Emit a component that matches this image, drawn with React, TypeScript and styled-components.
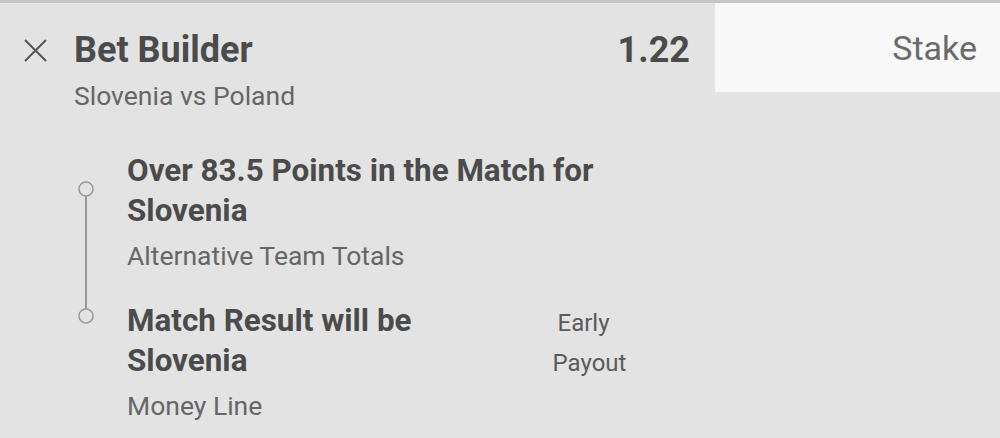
import React, { FC } from 'react';
import styled, { createGlobalStyle } from 'styled-components';

const GlobalStyle = createGlobalStyle`
  html, body {
    margin: 0;
    padding: 0;
    background: #e3e3e3;
  }
  body {
    font-family: Roboto, 'Liberation Sans', sans-serif;
  }
`;

const Slip = styled.div`
  width: 1000px;
  height: 438px;
  box-sizing: border-box;
  border-top: 3px solid #c5c5c5;
  background: #e3e3e3;
  overflow: hidden;
`;

const Header = styled.div`
  display: flex;
  align-items: flex-start;
`;

const HeaderMain = styled.div`
  flex: 1;
  display: flex;
  align-items: flex-start;
  padding: 23px 25px 0 24px;
`;

const CloseButton = styled.button`
  border: 0;
  background: none;
  padding: 0;
  margin: 13px 27px 0 0;
  width: 23px;
  height: 23px;
  display: flex;
  color: #555;
`;

const TitleBlock = styled.div`
  flex: 1;
  display: flex;
  flex-direction: column;
`;

const Title = styled.h1`
  margin: 0;
  font-size: 36px;
  line-height: 48px;
  font-weight: 700;
  color: #4b4b4b;
`;

const Subtitle = styled.div`
  margin-top: 5px;
  font-size: 26.5px;
  line-height: 34px;
  color: #666;
`;

const Odds = styled.div`
  font-size: 36px;
  line-height: 48px;
  font-weight: 700;
  color: #4b4b4b;
`;

const StakeBox = styled.div`
  width: 285px;
  height: 89px;
  box-sizing: border-box;
  background: #f8f8f8;
  display: flex;
  justify-content: flex-end;
  padding: 21px 23px 0 0;
  font-size: 34px;
  line-height: 48px;
  color: #6a6a6a;
`;

const Legs = styled.div`
  display: flex;
  padding: 38px 0 0 74px;
`;

const Rail = styled.svg`
  width: 53px;
  flex: none;
`;

const LegList = styled.div`
  display: flex;
  flex-direction: column;
  gap: 25px;
`;

const Leg = styled.div`
  display: flex;
  align-items: flex-start;
`;

const LegText = styled.div`
  width: max-content;
  max-width: 490px;
  display: flex;
  flex-direction: column;
`;

const LegTitle = styled.div`
  font-size: 31.4px;
  line-height: 40px;
  font-weight: 700;
  color: #4b4b4b;
`;

const LegMarket = styled.div`
  margin-top: 5px;
  font-size: 26.5px;
  line-height: 40px;
  color: #666;
`;

const Payout = styled.div`
  width: 100px;
  margin: 2px 0 0 122px;
  display: flex;
  flex-direction: column;
  font-size: 24px;
  line-height: 40px;
  color: #5a5a5a;
`;

const PayoutLine = styled.span<{ $indent?: number }>`
  text-align: center;
  padding-left: ${({ $indent = 0 }) => $indent}px;
`;

type LegData = { title: string[]; market: string; earlyPayout?: boolean };

const legs: LegData[] = [
  { title: ['Over 83.5 Points in the Match for', 'Slovenia'], market: 'Alternative Team Totals' },
  { title: ['Match Result will be', 'Slovenia'], market: 'Money Line', earlyPayout: true },
];

const BetLeg: FC<LegData> = ({ title, market, earlyPayout }) => (
  <Leg>
    <LegText>
      {title.map((line) => (
        <LegTitle key={line}>{line}</LegTitle>
      ))}
      <LegMarket>{market}</LegMarket>
    </LegText>
    {earlyPayout && (
      <Payout>
        <PayoutLine>Early</PayoutLine>
        <PayoutLine $indent={12}>Payout</PayoutLine>
      </Payout>
    )}
  </Leg>
);

export default function App() {
  return (
    <Slip>
      <GlobalStyle />
      <Header>
        <HeaderMain>
          <CloseButton aria-label="Remove">
            <svg width="23" height="23" viewBox="0 0 23 23">
              <path d="M1 1 L22 22 M22 1 L1 22" stroke="currentColor" strokeWidth="2" fill="none" />
            </svg>
          </CloseButton>
          <TitleBlock>
            <Title>Bet Builder</Title>
            <Subtitle>Slovenia vs Poland</Subtitle>
          </TitleBlock>
          <Odds>1.22</Odds>
        </HeaderMain>
        <StakeBox>Stake</StakeBox>
      </Header>
      <Legs>
        <Rail height="180" viewBox="0 0 53 180">
          <line x1="12" y1="45" x2="12" y2="158" stroke="#9a9a9a" strokeWidth="2" />
          <circle cx="12" cy="38" r="7" stroke="#9a9a9a" strokeWidth="1.6" fill="none" />
          <circle cx="12" cy="165" r="7" stroke="#9a9a9a" strokeWidth="1.6" fill="none" />
        </Rail>
        <LegList>
          {legs.map((leg) => (
            <BetLeg key={leg.market} {...leg} />
          ))}
        </LegList>
      </Legs>
    </Slip>
  );
}
